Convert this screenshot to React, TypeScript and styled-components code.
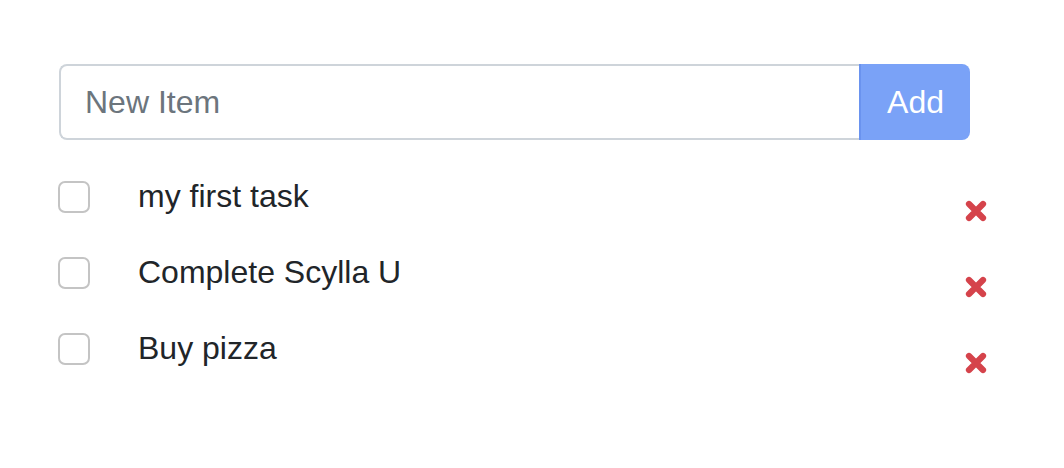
import React from "react";
import styled, { createGlobalStyle } from "styled-components";

const GlobalStyle = createGlobalStyle`
  html, body {
    margin: 0;
    padding: 0;
    background: #ffffff;
    font-family: "Liberation Sans", Arial, Helvetica, sans-serif;
    color: #212529;
  }
  * { box-sizing: border-box; }
`;

const Page = styled.div`
  padding: 64px 0 0 58px;
`;

const Form = styled.form`
  display: flex;
  width: 911px;
  height: 76px;
  margin-left: 1px;
`;

const Input = styled.input`
  flex: 1;
  min-width: 0;
  height: 76px;
  padding: 0 24px;
  border: 2px solid #ced4da;
  border-right: none;
  border-radius: 8px 0 0 8px;
  font-family: inherit;
  font-size: 32px;
  color: #495057;
  outline: none;
  background: #fff;
  &::placeholder {
    color: #6c757d;
  }
`;

const AddButton = styled.button`
  width: 111px;
  height: 76px;
  padding: 0;
  border: none;
  border-left: 2px solid #6a93ef;
  border-radius: 0 8px 8px 0;
  background: #7aa2f7;
  color: #ffffff;
  font-family: inherit;
  font-size: 32px;
  cursor: pointer;
`;

const List = styled.ul`
  list-style: none;
  margin: 26px 0 0 0;
  padding: 0;
  width: 930px;
`;

const Row = styled.li`
  display: flex;
  align-items: flex-start;
  height: 76px;
`;

const Check = styled.span`
  flex: none;
  width: 32px;
  height: 32px;
  margin-top: 15px;
  margin-right: 48px;
  border: 2px solid #c4c4c4;
  border-radius: 7px;
  background: #fff;
`;

const Label = styled.span`
  flex: 1;
  margin-top: 6px;
  font-size: 32px;
  line-height: 48px;
  color: #212529;
`;

const Remove = styled.button`
  flex: none;
  width: 24px;
  height: 24px;
  margin-top: 33px;
  padding: 0;
  border: none;
  background: none;
  display: flex;
  align-items: center;
  justify-content: center;
  cursor: pointer;
`;

const Cross = () => (
  <svg width="24" height="24" viewBox="0 0 24 24" aria-hidden="true">
    <path
      d="M5 5 L19 19 M19 5 L5 19"
      stroke="#d5434b"
      strokeWidth="6.2"
      strokeLinecap="round"
      fill="none"
    />
  </svg>
);

const items = ["my first task", "Complete Scylla U", "Buy pizza"];

export default function App() {
  return (
    <>
      <GlobalStyle />
      <Page>
        <Form onSubmit={(e) => e.preventDefault()}>
          <Input placeholder="New Item" />
          <AddButton type="submit">Add</AddButton>
        </Form>
        <List>
          {items.map((t) => (
            <Row key={t}>
              <Check />
              <Label>{t}</Label>
              <Remove aria-label="remove">
                <Cross />
              </Remove>
            </Row>
          ))}
        </List>
      </Page>
    </>
  );
}
